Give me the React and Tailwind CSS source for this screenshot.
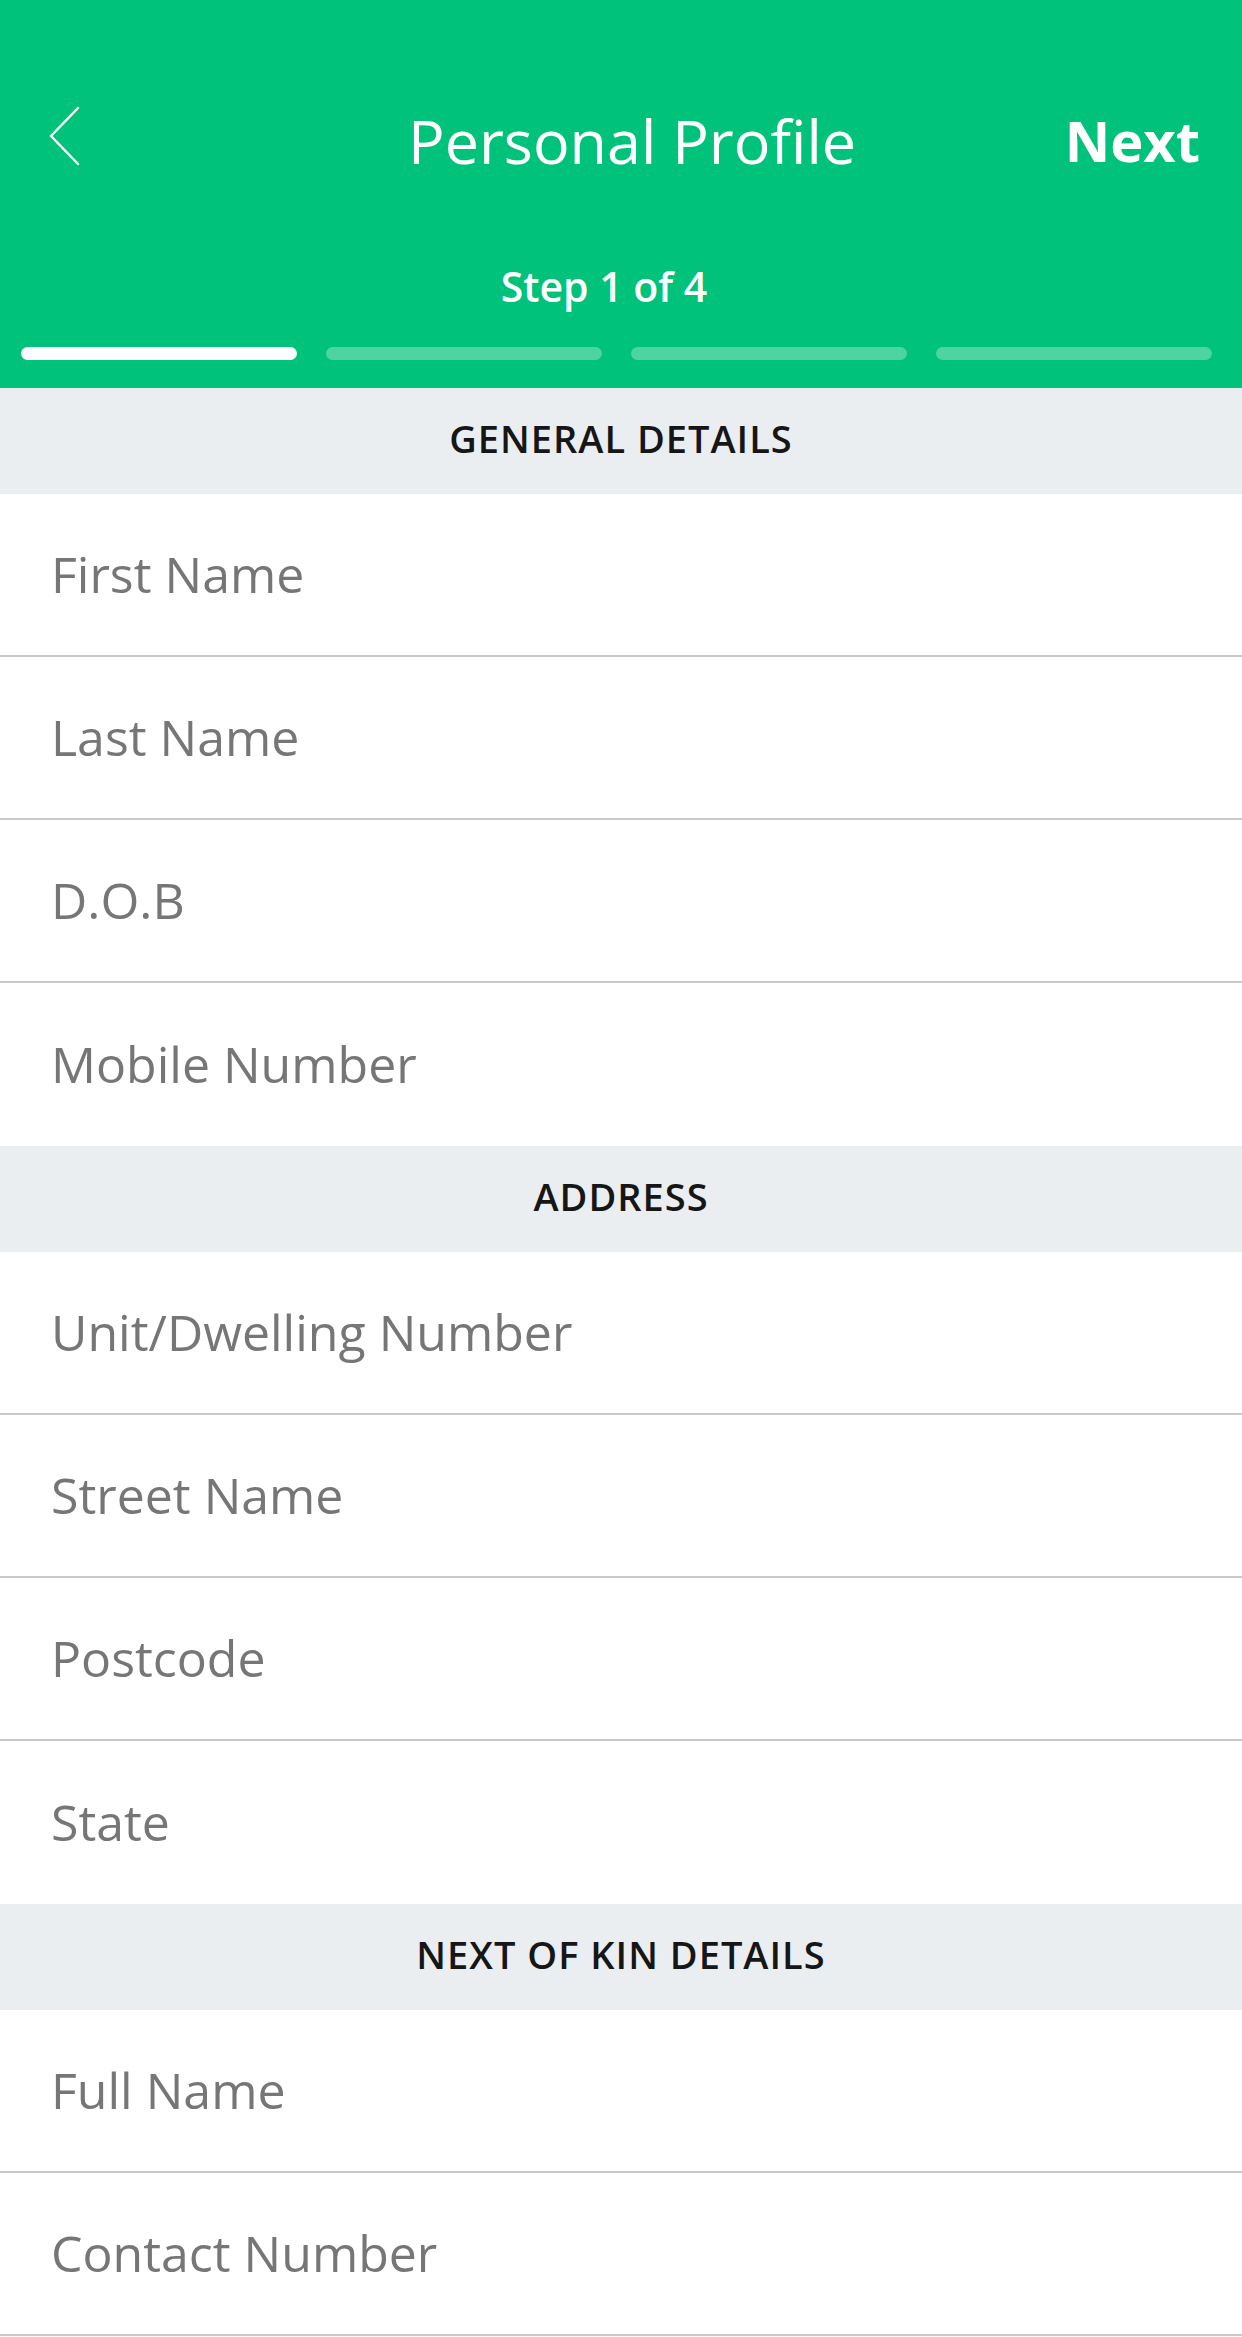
const sections = [
  {
    title: 'GENERAL DETAILS',
    fields: ['First Name', 'Last Name', 'D.O.B', 'Mobile Number'],
  },
  {
    title: 'ADDRESS',
    fields: ['Unit/Dwelling Number', 'Street Name', 'Postcode', 'State'],
  },
  {
    title: 'NEXT OF KIN DETAILS',
    fields: ['Full Name', 'Contact Number'],
    last: true,
  },
];

function BackIcon() {
  return (
    <svg width="34" height="60" viewBox="0 0 34 60" fill="none">
      <path d="M30 2 L3 30 L30 58" stroke="white" strokeWidth="2.5" strokeLinecap="round" strokeLinejoin="round" />
    </svg>
  );
}

export default function App() {
  return (
    <div className="w-[1242px] min-h-[2337px] bg-white" style={{ fontFamily: '"Open Sans", "Noto Sans", sans-serif' }}>
      {/* Header */}
      <div className="bg-[#00c27a] h-[388px] flex flex-col">
        <div className="relative flex items-center h-[80px] mt-[100px] pl-[48px] pr-[42px]">
          <div className="-mt-[8px]">
            <BackIcon />
          </div>
          <div className="absolute left-[390px] right-[368px] text-center text-white text-[61px] font-normal leading-none">
            Personal Profile
          </div>
          <div className="ml-auto text-white text-[56px] font-bold leading-none">Next</div>
        </div>
        <div className="mt-[86px] text-center text-white text-[41px] font-semibold leading-none pr-[34px]">
          Step 1 of 4
        </div>
        <div className="flex gap-[29px] pl-[21px] pr-[30px] mt-[40px]">
          <div className="flex-1 h-[13px] rounded-full bg-white" />
          <div className="flex-1 h-[13px] rounded-full bg-[#4dd4a0]" />
          <div className="flex-1 h-[13px] rounded-full bg-[#4dd4a0]" />
          <div className="flex-1 h-[13px] rounded-full bg-[#4dd4a0]" />
        </div>
      </div>

      {sections.map((s) => (
        <div key={s.title}>
          <div className="h-[106px] pb-[6px] bg-[#ebeef1] flex items-center justify-center text-[38px] font-semibold text-[#161616] tracking-[1px]">
            {s.title}
          </div>
          {s.fields.map((f, i) => {
            const border = s.last || i < s.fields.length - 1;
            return (
              <div
                key={f}
                className={`h-[163px] flex items-center px-[51px] text-[50px] text-[#767676] ${border ? 'border-b-2 border-[#c9c9cc]' : ''}`}
              >
                {f}
              </div>
            );
          })}
        </div>
      ))}
    </div>
  );
}
